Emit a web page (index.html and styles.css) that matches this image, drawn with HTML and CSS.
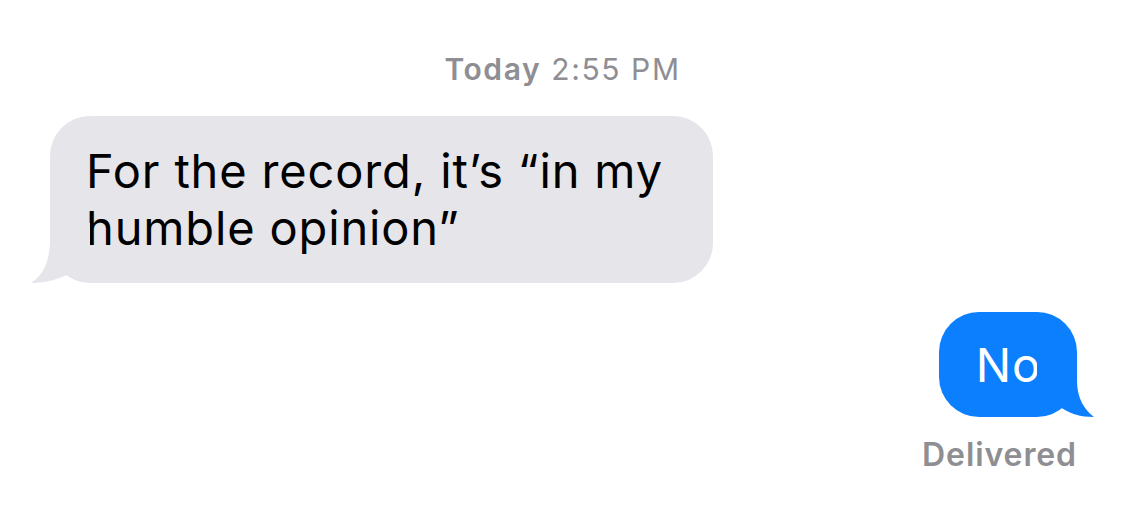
FILE: index.html
```html
<!DOCTYPE html>
<html>
  <head>
    <link rel="stylesheet" href="styles.css">
  </head>
  <body>
    <div class="thread">
      <div class="timestamp"><b>Today</b> 2:55 PM</div>

      <div class="row row-in">
        <div class="bubble bubble-in">
          For the record, it’s “in my<br>humble opinion”
          <svg class="tail tail-in" width="60" height="60" viewBox="0 0 60 60">
            <path d="M20,0 L20,17 C20,40 12,53 1,60 C16,60 30,56 40,50 L60,40 L60,0 Z" />
          </svg>
        </div>
      </div>

      <div class="row row-out">
        <div class="bubble bubble-out">
          No
          <svg class="tail tail-out" width="60" height="60" viewBox="0 0 60 60">
            <path d="M20,0 L20,24 C20,42 12,53 3,60 C16,60 28,57 38,49 L60,40 L60,0 Z" />
          </svg>
        </div>
        <div class="status">Delivered</div>
      </div>
    </div>
  </body>
</html>
```

FILE: styles.css
```css
body {
  margin: 0;
  background: #ffffff;
  font-family: Inter, "Liberation Sans", sans-serif;
}
.thread {
  display: flex;
  flex-direction: column;
  padding: 52px 48px 0 50px;
}
.timestamp {
  text-align: center;
  font-size: 30px;
  line-height: 34px;
  letter-spacing: 1.6px;
  color: #8e8e93;
  margin-right: 2px;
}
.timestamp b {
  font-weight: 600;
}
.row {
  display: flex;
  flex-direction: column;
}
.row-in {
  align-items: flex-start;
  margin-top: 30px;
}
.row-out {
  align-items: flex-end;
  margin-top: 29px;
}
.bubble {
  position: relative;
  font-size: 47px;
  line-height: 57px;
  letter-spacing: 0.85px;
  border-radius: 40px;
}
.bubble-in {
  background: #e5e5ea;
  color: #000000;
  padding: 26px 50px 27px 36px;
}
.bubble-out {
  background: #0b7ffd;
  color: #ffffff;
  padding: 24px 36px 24px 37px;
}
.tail {
  position: absolute;
  bottom: 0;
}
.tail-in {
  left: -20px;
  fill: #e5e5ea;
}
.tail-out {
  right: -20px;
  fill: #0b7ffd;
  transform: scaleX(-1);
}
.status {
  margin-top: 20px;
  font-size: 32px;
  line-height: 36px;
  letter-spacing: 0.9px;
  font-weight: 600;
  color: #8e8e93;
}
```
